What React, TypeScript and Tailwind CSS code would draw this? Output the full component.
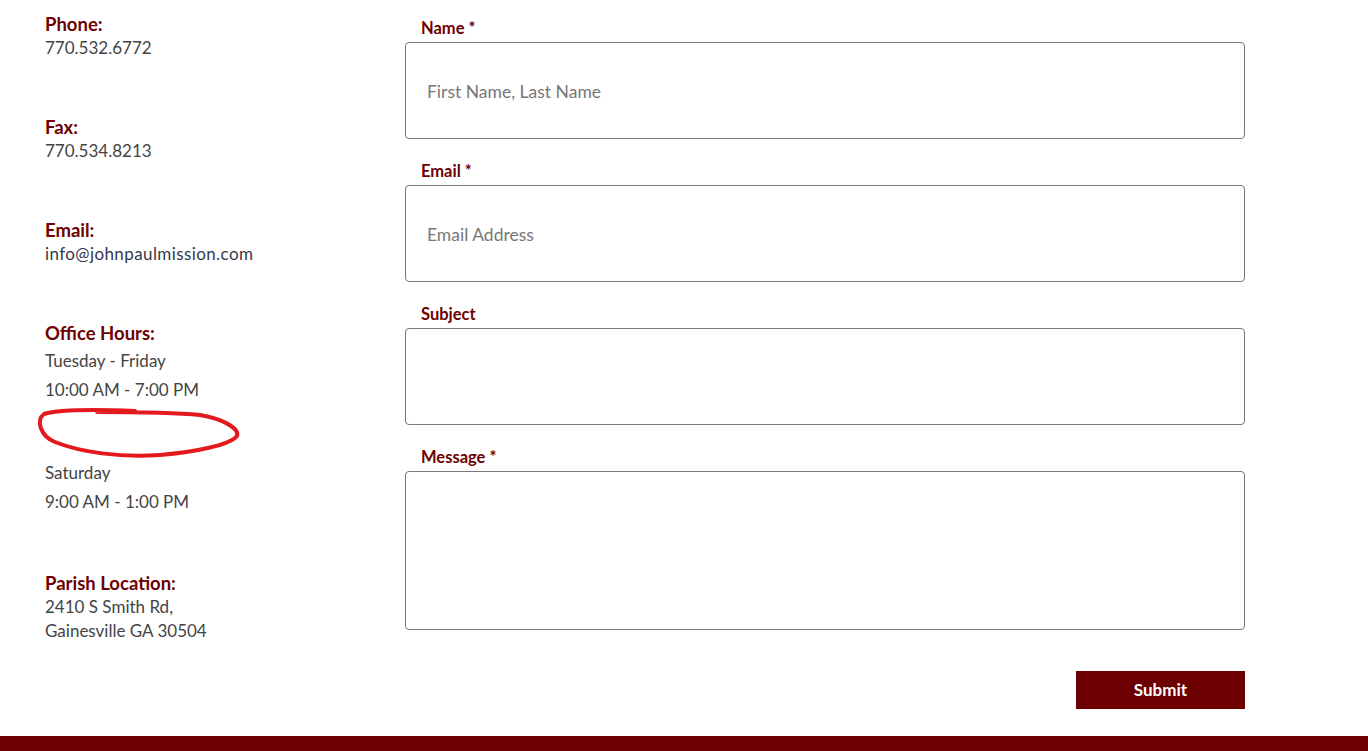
import React from "react";

const font = { fontFamily: "Lato, 'Noto Sans', sans-serif" };

function Label({ children }: { children: React.ReactNode }) {
  return <div className="text-[18.5px] font-bold leading-[24px] text-[#6d0000]">{children}</div>;
}

function Field({ label, req, placeholder, h }: { label: string; req?: boolean; placeholder?: string; h: string }) {
  return (
    <div className="flex flex-col">
      <div className="pl-4 text-[16.5px] font-bold leading-[20px] text-[#6d0000] mb-1">
        {label}
        {req && <span className="ml-1">*</span>}
      </div>
      <div className={`${h} w-[840px] rounded-[4px] border border-[#777] flex items-center px-[21px] pt-[3px]`}>
        {placeholder && <span className="text-[17.5px] text-[#777]">{placeholder}</span>}
      </div>
    </div>
  );
}

export default function App() {
  return (
    <div className="relative min-h-[751px] bg-white flex flex-col" style={font}>
      <div className="flex flex-1 pl-[45px]">
        <div className="w-[360px] pt-[12px] text-[17px] text-[#444] flex flex-col">
          <Label>Phone:</Label>
          <div className="leading-[24px]">770.532.6772</div>
          <div className="mt-[55px]"><Label>Fax:</Label></div>
          <div className="leading-[24px]">770.534.8213</div>
          <div className="mt-[55px]"><Label>Email:</Label></div>
          <div className="leading-[24px] text-[#34394a] tracking-[0.4px]">info@johnpaulmission.com</div>
          <div className="mt-[55px]"><Label>Office Hours:</Label></div>
          <div className="leading-[29px] mt-[1px]">Tuesday - Friday</div>
          <div className="leading-[29px]">10:00 AM - 7:00 PM</div>
          <div className="leading-[29px] mt-[54px]">Saturday</div>
          <div className="leading-[29px]">9:00 AM - 1:00 PM</div>
          <div className="mt-[55px]"><Label>Parish Location:</Label></div>
          <div className="leading-[23.5px]">2410 S Smith Rd,</div>
          <div className="leading-[23.5px]">Gainesville GA 30504</div>
        </div>
        <div className="pt-[18px] flex flex-col gap-[22px]">
          <Field label="Name" req placeholder="First Name, Last Name" h="h-[97px]" />
          <Field label="Email" req placeholder="Email Address" h="h-[97px]" />
          <Field label="Subject" h="h-[97px]" />
          <Field label="Message" req h="h-[159px]" />
          <div className="flex justify-end mt-[19px]">
            <button className="w-[169px] h-[38px] bg-[#6d0000] text-white text-[17px] font-bold">Submit</button>
          </div>
        </div>
      </div>
      <div className="h-[15px] bg-[#6d0000] mt-auto" />
      <svg className="absolute left-0 top-0 pointer-events-none" width="260" height="470">
        <path
          d="M 135 411 C 110 410, 60 409, 44 414 C 36 420, 40 436, 55 442 C 80 452, 120 458, 160 455 C 195 452, 230 445, 237 436 C 240 428, 220 418, 200 415 C 170 412, 130 412, 97 412"
          fill="none"
          stroke="#e3191e"
          strokeWidth="4"
          strokeLinecap="round"
        />
      </svg>
    </div>
  );
}
